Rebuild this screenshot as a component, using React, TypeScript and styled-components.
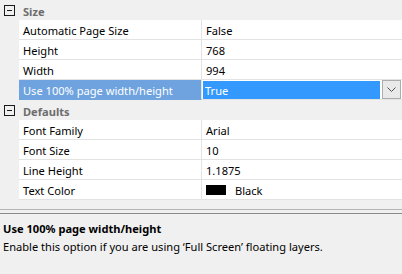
import React from "react";
import styled, { createGlobalStyle } from "styled-components";

const Global = createGlobalStyle`
  html, body { margin: 0; padding: 0; }
  body {
    width: 402px; height: 274px; overflow: hidden;
    background: #f0f0f0;
    font-family: "Noto Sans", "Open Sans", sans-serif;
    font-size: 11.1px;
  }
`;

const Frame = styled.div`
  width: 402px;
  height: 274px;
  display: flex;
  flex-direction: column;
  background: #f0f0f0;
`;

const Grid = styled.div`
  display: flex;
  flex-direction: column;
  background: #f0f0f0;
`;

const CategoryRow = styled.div`
  height: 20px;
  display: flex;
  align-items: center;
  background: #f0f0f0;
`;

const Toggle = styled.div`
  width: 9px;
  height: 9px;
  border: 1px solid #1a1a1a;
  margin-left: 4px;
  margin-right: 8px;
  position: relative;
  &::after {
    content: "";
    position: absolute;
    left: 2px;
    right: 2px;
    top: 4px;
    height: 1px;
    background: #1a1a1a;
  }
`;

const CategoryLabel = styled.span`
  font-weight: bold;
  color: #6d6d6d;
  padding-top: 2px;
`;

const Row = styled.div`
  height: 20px;
  display: flex;
  padding-left: 19px;
`;

const NameCell = styled.div<{ $selected?: boolean }>`
  width: 178px;
  height: 17px;
  padding: 2px 0 0 4px;
  border-bottom: 1px solid ${(p) => (p.$selected ? "#6ea3df" : "#e3e3e3")};
  border-right: 1px solid #e3e3e3;
  background: ${(p) => (p.$selected ? "#6ea3df" : "#ffffff")};
  color: ${(p) => (p.$selected ? "#ffffff" : "#000000")};
  display: flex;
  align-items: center;
  white-space: nowrap;
`;

const ValueCell = styled.div`
  flex: 1;
  height: 17px;
  padding: 2px 0 0 4px;
  border-bottom: 1px solid #e3e3e3;
  background: #ffffff;
  display: flex;
  align-items: center;
  white-space: nowrap;
`;

const EditorCell = styled.div`
  flex: 1;
  height: 19px;
  padding-left: 1px;
  border-bottom: 1px solid #e3e3e3;
  background: #ffffff;
  display: flex;
  align-items: center;
`;

const EditBox = styled.div`
  flex: 1;
  height: 16px;
  padding: 2px 0 0 2px;
  background: #3399ff;
  color: #ffffff;
  display: flex;
  align-items: center;
`;

const DropButton = styled.div`
  width: 19px;
  height: 19px;
  margin: 0 1px 0 2px;
  border: 1px solid #adadad;
  background: #e9e9e9;
  display: flex;
  align-items: center;
  justify-content: center;
  box-sizing: border-box;
`;

const Swatch = styled.span`
  width: 20px;
  height: 10px;
  background: #000;
  margin: -1px 9px 0 0;
`;

const Splitter = styled.div`
  margin-top: 9px;
  height: 3px;
  border-top: 1px solid #b4b4b4;
  border-bottom: 1px solid #8a8a8a;
  background: #f0f0f0;
`;

const Description = styled.div`
  padding: 6px 3px 0 3px;
  display: flex;
  flex-direction: column;
  gap: 1px;
  color: #000;
`;

const DescTitle = styled.div`
  font-weight: bold;
  line-height: 17px;
`;

const DescText = styled.div`
  line-height: 17px;
`;

type Prop = { name: string; value: React.ReactNode; selected?: boolean };

const sizeProps: Prop[] = [
  { name: "Automatic Page Size", value: "False" },
  { name: "Height", value: "768" },
  { name: "Width", value: "994" },
  { name: "Use 100% page width/height", value: "True", selected: true },
];

const defaultProps: Prop[] = [
  { name: "Font Family", value: "Arial" },
  { name: "Font Size", value: "10" },
  { name: "Line Height", value: "1.1875" },
  {
    name: "Text Color",
    value: (
      <>
        <Swatch />
        Black
      </>
    ),
  },
];

const Chevron = () => (
  <svg width="9" height="5" viewBox="0 0 9 5">
    <path d="M0.5 0.5 L4.5 4.5 L8.5 0.5" fill="none" stroke="#505050" strokeWidth="1" />
  </svg>
);

const PropRow = ({ p }: { p: Prop }) => (
  <Row>
    <NameCell $selected={p.selected}>{p.name}</NameCell>
    {p.selected ? (
      <EditorCell>
        <EditBox>{p.value}</EditBox>
        <DropButton>
          <Chevron />
        </DropButton>
      </EditorCell>
    ) : (
      <ValueCell>{p.value}</ValueCell>
    )}
  </Row>
);

const Category = ({ label, props }: { label: string; props: Prop[] }) => (
  <>
    <CategoryRow>
      <Toggle />
      <CategoryLabel>{label}</CategoryLabel>
    </CategoryRow>
    {props.map((p) => (
      <PropRow key={p.name} p={p} />
    ))}
  </>
);

export default function App() {
  return (
    <>
      <Global />
      <Frame>
        <Grid>
          <Category label="Size" props={sizeProps} />
          <Category label="Defaults" props={defaultProps} />
        </Grid>
        <Splitter />
        <Description>
          <DescTitle>Use 100% page width/height</DescTitle>
          <DescText>Enable this option if you are using ‘Full Screen’ floating layers.</DescText>
        </Description>
      </Frame>
    </>
  );
}
